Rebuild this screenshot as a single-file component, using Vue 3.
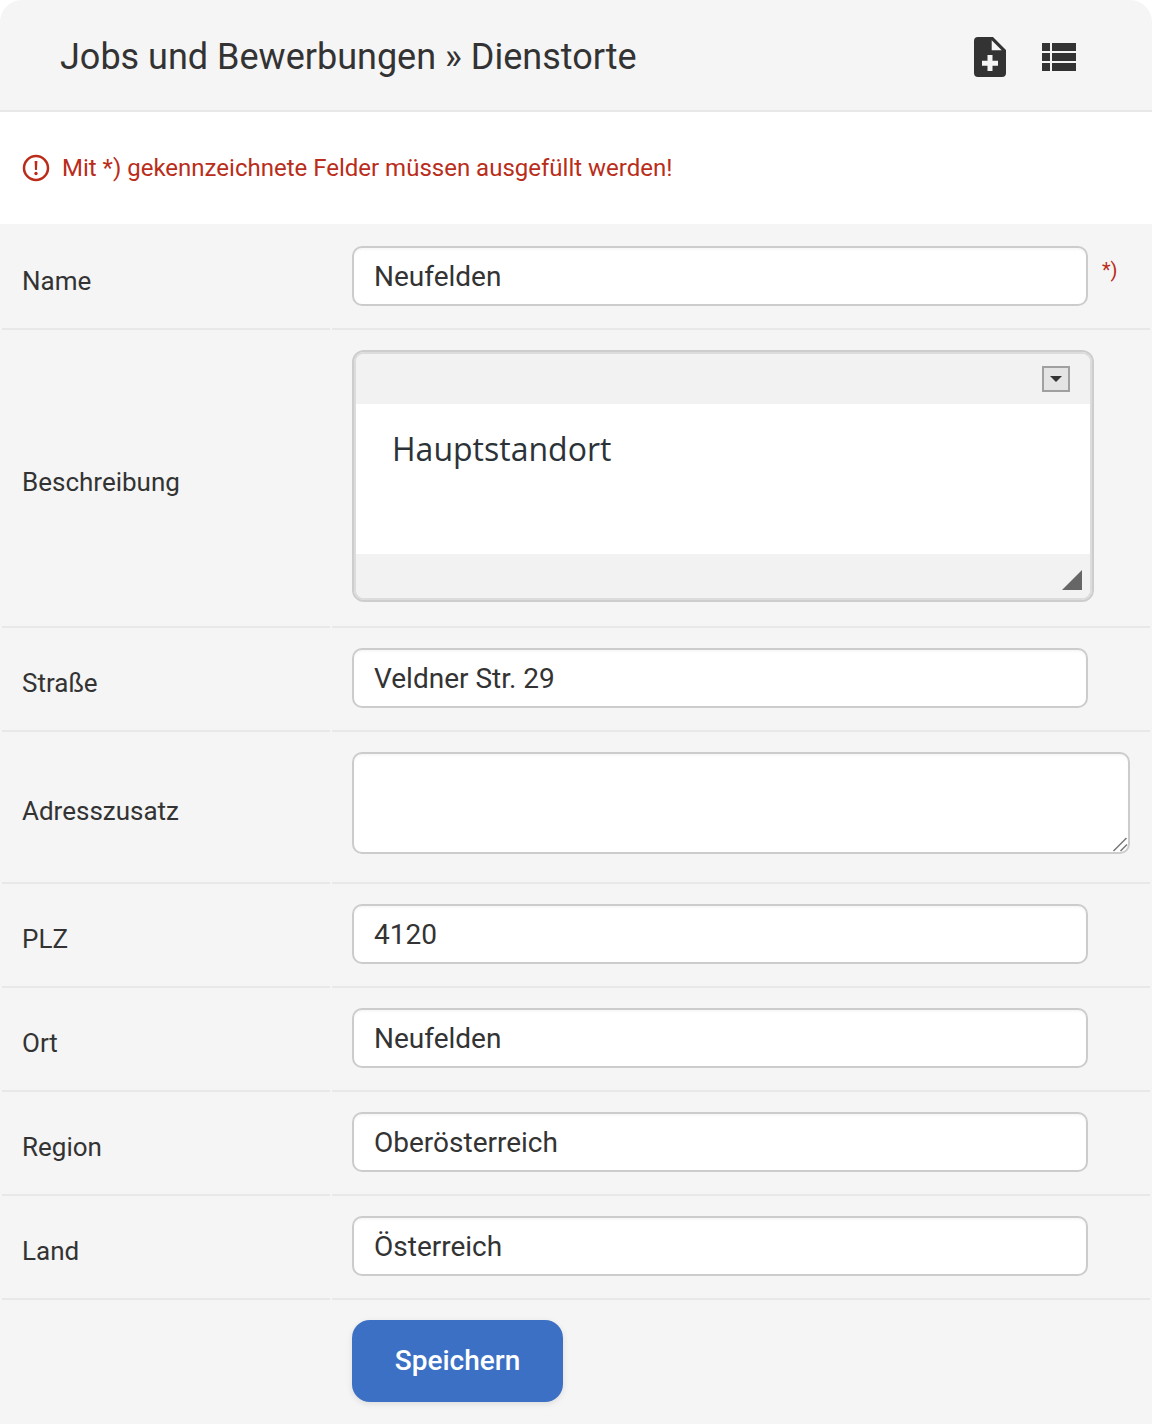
<script setup>
const before = [{ label: 'Name', value: 'Neufelden', required: true }]
const after = [
  { label: 'PLZ', value: '4120' },
  { label: 'Ort', value: 'Neufelden' },
  { label: 'Region', value: 'Oberösterreich' },
  { label: 'Land', value: 'Österreich' },
]
</script>

<template>
  <div class="page">
    <header class="head">
      <h1 class="title">Jobs und Bewerbungen » Dienstorte</h1>
      <div class="tools">
        <svg viewBox="0 0 32 40" width="32" height="40">
          <path fill="#333" fill-rule="evenodd" d="M4 0H19L32 13V36a4 4 0 0 1-4 4H4a4 4 0 0 1-4-4V4a4 4 0 0 1 4-4ZM17.700 3.300V13.300H27.700ZM13.500 18V23.700H8V28.700H13.500V34H18.500V28.700H24V23.700H18.500V18Z" />
        </svg>
        <svg viewBox="0 0 34 28" width="34" height="28">
          <path fill="#333" d="M0 0H8V8H0ZM10 0H34V8H10ZM0 10H8V18H0ZM10 10H34V18H10ZM0 20H8V28H0ZM10 20H34V28H10Z" />
        </svg>
      </div>
    </header>

    <div class="notice">
      <svg viewBox="0 0 28 28" width="28" height="28">
        <circle cx="14" cy="14" r="12" fill="none" stroke="#b92d1a" stroke-width="2.500" />
        <path fill="#b92d1a" d="M12.600 7H15.400L15 16H13Z" />
        <circle cx="14" cy="19.500" r="1.700" fill="#b92d1a" />
      </svg>
      <span>Mit *) gekennzeichnete Felder müssen ausgefüllt werden!</span>
    </div>

    <form class="form" @submit.prevent>
      <div v-for="f in before" :key="f.label" class="row">
        <label class="lab">{{ f.label }}</label>
        <div class="cell cell-req">
          <input class="inp" :value="f.value" />
          <span class="req">*)</span>
        </div>
      </div>

      <div class="row">
        <label class="lab">Beschreibung</label>
        <div class="cell cell-editor">
          <div class="editor">
            <div class="ed-inner">
              <div class="ed-bar">
                <span class="ed-btn"><i class="caret"></i></span>
              </div>
              <div class="ed-body">Hauptstandort</div>
              <div class="ed-foot">
                <svg viewBox="0 0 20 20" width="20" height="20"><path fill="#666" d="M20 0V20H0Z" /></svg>
              </div>
            </div>
          </div>
        </div>
      </div>

      <div class="row">
        <label class="lab">Straße</label>
        <div class="cell"><input class="inp" value="Veldner Str. 29" /></div>
      </div>

      <div class="row">
        <label class="lab">Adresszusatz</label>
        <div class="cell cell-area">
          <div class="area-wrap">
            <textarea class="area"></textarea>
            <svg class="grip" viewBox="0 0 16 16" width="16" height="16">
              <path fill="none" stroke="#777" stroke-width="1.500" d="M1.500 15 14.500 2M8.500 15 15 8.500" />
            </svg>
          </div>
        </div>
      </div>

      <div v-for="f in after" :key="f.label" class="row">
        <label class="lab">{{ f.label }}</label>
        <div class="cell"><input class="inp" :value="f.value" /></div>
      </div>

      <div class="row row-last">
        <div></div>
        <div class="cell-btn"><button class="save" type="submit">Speichern</button></div>
      </div>
    </form>
  </div>
</template>

<style>
html, body { margin: 0; background: #fff; }
</style>

<style scoped>
.page {
  width: 1152px;
  height: 1424px;
  background: #f5f5f5;
  border-radius: 22px 22px 0 0;
  font-family: Roboto, "Liberation Sans", sans-serif;
  color: #333;
  overflow: hidden;
}
.head {
  box-sizing: border-box;
  height: 112px;
  border-bottom: 2px solid #e8e8e8;
  display: flex;
  align-items: center;
  justify-content: space-between;
  padding: 4px 76px 0 60px;
}
.title { margin: 0; font-size: 36px; font-weight: 400; line-height: 1; }
.tools { display: flex; align-items: center; gap: 36px; }
.tools svg { display: block; }
.notice {
  height: 112px;
  background: #fff;
  display: flex;
  align-items: center;
  gap: 12px;
  padding-left: 22px;
  color: #b92d1a;
  font-size: 24px;
}
.form { padding: 2px 2px 0; }
.row {
  display: grid;
  grid-template-columns: 328px 818px;
  column-gap: 2px;
}
.lab {
  display: flex;
  align-items: center;
  padding: 8px 0 0 20px;
  font-size: 26px;
  border-bottom: 2px solid #e8e8e8;
}
.cell {
  padding: 20px 20px 22px;
  border-bottom: 2px solid #e8e8e8;
}
.cell-req { display: flex; align-items: flex-start; }
.cell-editor { padding-bottom: 24px; }
.cell-area { padding-bottom: 28px; }
.inp {
  display: block;
  box-sizing: border-box;
  width: 736px;
  height: 60px;
  padding: 1px 20px 0;
  border: 2px solid #ccc;
  border-radius: 10px;
  background: #fff;
  font: 400 28px Roboto, sans-serif;
  color: #333;
  outline: none;
  box-shadow: inset 0 2px 2px rgba(0, 0, 0, 0.03);
}
.req { margin: 12px 0 0 14px; color: #b92d1a; font-size: 20px; }
.area-wrap { position: relative; width: 778px; height: 102px; }
.area {
  display: block;
  box-sizing: border-box;
  width: 778px;
  height: 102px;
  border: 2px solid #ccc;
  border-radius: 10px;
  background: #fff;
  outline: none;
  margin: 0;
  resize: none;
  box-shadow: inset 0 2px 2px rgba(0, 0, 0, 0.03);
}
.grip { position: absolute; right: 2px; bottom: 2px; }
.editor {
  box-sizing: border-box;
  width: 742px;
  height: 252px;
  border: 2px solid #cdcdcd;
  border-radius: 12px;
}
.ed-inner {
  box-sizing: border-box;
  height: 100%;
  border: 2px solid #dcdcdc;
  border-radius: 10px;
  overflow: hidden;
  display: flex;
  flex-direction: column;
}
.ed-bar {
  height: 50px;
  background: #f2f2f2;
  display: flex;
  align-items: center;
  justify-content: flex-end;
  padding-right: 20px;
}
.ed-btn {
  box-sizing: border-box;
  width: 28px;
  height: 26px;
  border: 2px solid #a0a0a0;
  background: #e4e4e4;
  display: flex;
  align-items: center;
  justify-content: center;
}
.caret {
  width: 0;
  height: 0;
  border-left: 6px solid transparent;
  border-right: 6px solid transparent;
  border-top: 6px solid #333;
}
.ed-body {
  height: 150px;
  box-sizing: border-box;
  background: #fff;
  padding: 25px 0 0 36px;
  font: 400 32px/40px "Open Sans", sans-serif;
  color: #2c3338;
}
.ed-foot {
  flex: 1;
  background: #f2f2f2;
  display: flex;
  align-items: flex-end;
  justify-content: flex-end;
  padding: 0 8px 8px 0;
}
.cell-btn { padding: 20px 20px 0; }
.save {
  width: 211px;
  height: 82px;
  border: 0;
  border-radius: 18px;
  background: #3b70c4;
  color: #fff;
  font: 500 28px Roboto, sans-serif;
  box-shadow: 0 2px 6px rgba(0, 0, 0, 0.1);
  padding: 0 0 2px;
}
</style>
